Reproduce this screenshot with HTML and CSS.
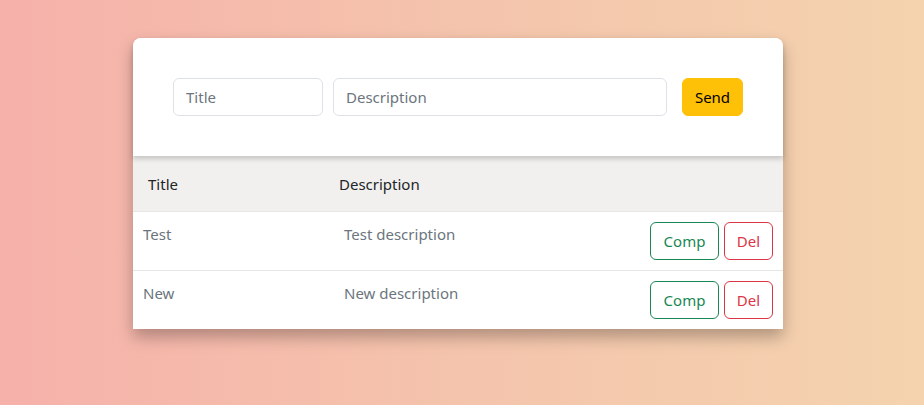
FILE: index.html
```html
<!DOCTYPE html>
<html>
<head>
<meta charset="utf-8">
<link rel="stylesheet" href="styles.css">
</head>
<body>
<div class="card">
  <form class="form">
    <input class="input title-input" type="text" placeholder="Title">
    <input class="input desc-input" type="text" placeholder="Description">
    <button type="button" class="btn btn-send">Send</button>
  </form>
  <div class="table">
    <div class="thead">
      <div class="th th-title">Title</div>
      <div class="th">Description</div>
    </div>
    <div class="row">
      <div class="cell cell-title">Test</div>
      <div class="cell cell-desc">Test description</div>
      <div class="actions">
        <button type="button" class="btn btn-comp">Comp</button>
        <button type="button" class="btn btn-del">Del</button>
      </div>
    </div>
    <div class="row">
      <div class="cell cell-title">New</div>
      <div class="cell cell-desc">New description</div>
      <div class="actions">
        <button type="button" class="btn btn-comp">Comp</button>
        <button type="button" class="btn btn-del">Del</button>
      </div>
    </div>
  </div>
</div>
</body>
</html>
```
FILE: styles.css
```css
* { box-sizing: border-box; }
html, body { margin: 0; height: 100%; }
body {
  background: linear-gradient(90deg, #f6b1aa 0%, #f4c4ac 50%, #f4d3ae 100%);
  font-family: "Noto Sans", "Open Sans", sans-serif;
  font-size: 16px;
  padding-top: 38px;
}
.card {
  width: 650px;
  margin-left: 133px;
  background: #fff;
  border-radius: 8px 8px 0 0;
  box-shadow: 0 8px 16px rgba(0,0,0,0.28);
}
.form {
  position: relative;
  z-index: 1;
  display: flex;
  align-items: center;
  height: 118px;
  padding: 0 40px;
  background: #fff;
  border-radius: 8px 8px 0 0;
  box-shadow: 0 3px 5px rgba(0,0,0,0.18);
  margin: 0;
}
.input {
  height: 38px;
  border: 1px solid #dee2e6;
  border-radius: 6px;
  padding: 0 12px;
  font-family: inherit;
  font-size: 15px;
  color: #212529;
  outline: none;
}
.input::placeholder { color: #6c757d; }
.title-input { width: 150px; margin-right: 10px; }
.desc-input { width: 334px; margin-right: 15px; }
.btn {
  height: 38px;
  border-radius: 6px;
  font-family: inherit;
  font-size: 15px;
  padding: 0 12px;
  cursor: pointer;
  background: #fff;
}
.btn-send {
  width: 61px;
  background: #ffc107;
  border: 1px solid #ffc107;
  color: #000;
  padding: 0;
}
.thead {
  display: grid;
  grid-template-columns: 206px 1fr;
  height: 55px;
  align-items: center;
  background: #f1f0ee;
  color: #212529;
  font-size: 15px;
}
.th-title { padding-left: 15px; }
.row {
  display: grid;
  grid-template-columns: 201px 1fr auto;
  align-items: start;
  height: 59px;
  padding: 10px 10px 0 10px;
  border-top: 1px solid #e6e6e6;
  color: #6c757d;
  font-size: 15px;
}
.cell { line-height: 24px; }
.actions { display: flex; gap: 5px; }
.btn-comp { width: 69px; border: 1px solid #198754; color: #198754; padding: 0; }
.btn-del { width: 49px; border: 1px solid #dc3545; color: #dc3545; padding: 0; }
```
